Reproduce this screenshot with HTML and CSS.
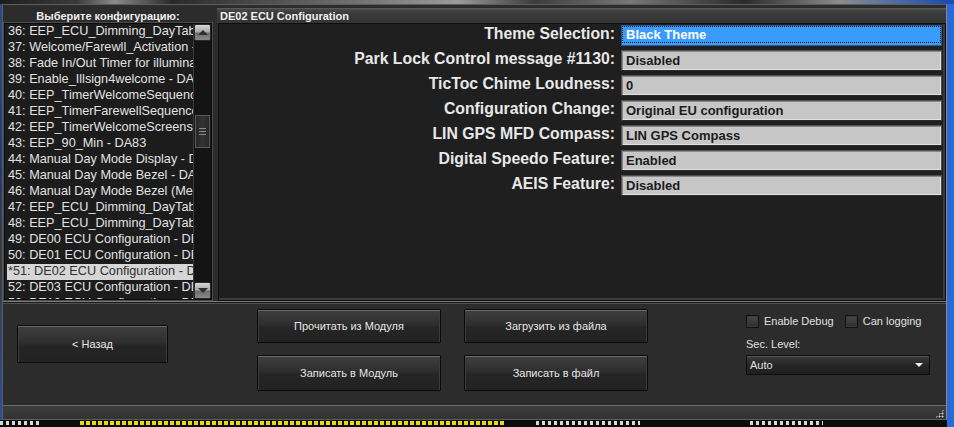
FILE: index.html
```html
<!DOCTYPE html>
<html lang="ru">
<head>
<meta charset="UTF-8">
<meta name="viewport" content="width=device-width, initial-scale=1.0">
<title>DE02 ECU Configuration</title>
<link rel="stylesheet" href="styles.css">
</head>
<body>
<div class="desk-top"></div>
<div class="desk">
  <div class="desk-left"></div>
  <div class="window">
    <div class="main">
      <div class="configs">
        <div class="caption center">Выберите конфигурацию:</div>
        <div class="listbox">
          <ul class="items">
            <li>36: EEP_ECU_Dimming_DayTable2 - DA80</li>
            <li>37: Welcome/Farewll_Activation - DA81</li>
            <li>38: Fade In/Out Timer for illumination - DA82</li>
            <li>39: Enable_Illsign4welcome - DA84</li>
            <li>40: EEP_TimerWelcomeSequence - DA85</li>
            <li>41: EEP_TimerFarewellSequence - DA86</li>
            <li>42: EEP_TimerWelcomeScreens - DA87</li>
            <li>43: EEP_90_Min - DA83</li>
            <li>44: Manual Day Mode Display - DA88</li>
            <li>45: Manual Day Mode Bezel - DA89</li>
            <li>46: Manual Day Mode Bezel (Menu) - DA8A</li>
            <li>47: EEP_ECU_Dimming_DayTable3 - DA8B</li>
            <li>48: EEP_ECU_Dimming_DayTable4 - DA8C</li>
            <li>49: DE00 ECU Configuration - DE00</li>
            <li>50: DE01 ECU Configuration - DE01</li>
            <li class="selected">*51: DE02 ECU Configuration - DE02</li>
            <li>52: DE03 ECU Configuration - DE03</li>
            <li>53: DE10 ECU Configuration - DE10</li>
          </ul>
          <div class="vscroll">
            <div class="sb-btn up"><span></span></div>
            <div class="sb-track"><div class="sb-thumb"></div></div>
            <div class="sb-btn down"><span></span></div>
          </div>
        </div>
      </div>
      <div class="editor">
        <div class="caption bar">DE02 ECU Configuration</div>
        <div class="editor-body">
          <div class="form">
            <div class="label">Theme Selection:</div>
            <div class="field focus"><span>Black Theme</span></div>
            <div class="label">Park Lock Control message #1130:</div>
            <div class="field"><span>Disabled</span></div>
            <div class="label">TicToc Chime Loudness:</div>
            <div class="field"><span>0</span></div>
            <div class="label">Configuration Change:</div>
            <div class="field"><span>Original EU configuration</span></div>
            <div class="label">LIN GPS MFD Compass:</div>
            <div class="field"><span>LIN GPS Compass</span></div>
            <div class="label">Digital Speedo Feature:</div>
            <div class="field"><span>Enabled</span></div>
            <div class="label">AEIS Feature:</div>
            <div class="field"><span>Disabled</span></div>
          </div>
        </div>
      </div>
    </div>

    <div class="actions">
      <button class="btn back">&lt; Назад</button>
      <div class="btn-grid">
        <button class="btn">Прочитать из Модуля</button>
        <button class="btn">Загрузить из файла</button>
        <button class="btn">Записать в Модуль</button>
        <button class="btn">Записать в файл</button>
      </div>
      <div class="options">
        <div class="checks">
          <label class="check"><span class="box"></span>Enable Debug</label>
          <label class="check"><span class="box"></span>Can logging</label>
        </div>
        <div class="opt-label">Sec. Level:</div>
        <div class="combo"><span>Auto</span><span class="arrow"></span></div>
      </div>
    </div>

    <div class="statusbar"><span class="grip"></span></div>
  </div>
</div>
<div class="desk-bottom"></div>
</body>
</html>
```

FILE: styles.css
```css
body {
  margin: 0;
  width: 954px;
  height: 427px;
  overflow: hidden;
  background: linear-gradient(90deg, #1a4fb8, #2a6ad8);
  font-family: "Liberation Sans", Arial, sans-serif;
  color: #e4e4e4;
}
.desk-top {
  height: 4px;
  background: linear-gradient(90deg, #1d1d1d 0, #3a3a3a 8%, #8a8a8a 12%, #2a2a2a 18%, #555 30%, #9a9a9a 48%, #3c3c3c 56%, #777 66%, #2a2a2a 78%, #8c8c8c 88%, #1e4fae 99%);
}
.desk {
  display: flex;
  height: 416px;
}
.desk-left {
  width: 2px;
  background: linear-gradient(#2a4d8a, #1a3a7a 40%, #3a3a3a 60%, #2850a0);
}
.window {
  width: 943px;
  border: 1px solid #5e5e5e;
  border-right-color: #8a8a8a;
  background: #2c2c2c;
  display: flex;
  flex-direction: column;
}
.desk-bottom {
  height: 7px;
  background:
    repeating-linear-gradient(90deg, #e4dc10 0 4px, transparent 4px 6px) 80px 1px / 425px 4px no-repeat,
    repeating-linear-gradient(90deg, #d8d8d8 0 3px, transparent 3px 6px) 0 1px / 40px 4px no-repeat,
    repeating-linear-gradient(90deg, #d8d8d8 0 3px, transparent 3px 6px) 536px 1px / 104px 4px no-repeat,
    repeating-linear-gradient(90deg, #d8d8d8 0 3px, transparent 3px 6px) 750px 1px / 73px 4px no-repeat,
    linear-gradient(90deg, #0c0c0c 947px, #2a6ad8 947px);
}

/* top part */
.main {
  height: 296px;
  display: flex;
  padding: 4px 0 0 1px;
  box-sizing: border-box;
}
.caption {
  height: 14px;
  font-size: 11px;
  font-weight: bold;
  color: #f0f0f0;
  line-height: 14px;
  white-space: nowrap;
}
.caption.center {
  text-align: center;
}
.caption.bar {
  padding-left: 3px;
  background: linear-gradient(#4a4a4a, #3a3a3a 30%, #343434);
  border-top: 1px solid #5a5a5a;
  margin-top: -1px;
}
.configs {
  width: 208px;
  display: flex;
  flex-direction: column;
}
.listbox {
  height: 275px;
  display: flex;
  background: #1c1c1c;
  border: 1px solid #0c0c0c;
  box-shadow: 0 0 0 1px #4a4a4a;
  overflow: hidden;
}
.items {
  flex: 1;
  margin: 0;
  padding: 0 0 0 2px;
  list-style: none;
  overflow: hidden;
  font-size: 12.7px;
}
.items li {
  height: 16px;
  line-height: 15px;
  white-space: nowrap;
  overflow: hidden;
  padding-left: 1px;
  color: #e2e2e2;
}
.items li.selected {
  background: #d6d6d6;
  color: #303030;
}
.vscroll {
  width: 17px;
  display: flex;
  flex-direction: column;
  background: #141414;
  border-left: 1px solid #3a3a3a;
}
.sb-btn {
  height: 17px;
  border-radius: 2px;
  background: linear-gradient(#d8d8d8, #a8a8a8 45%, #6e6e6e 55%, #8a8a8a);
  border: 1px solid #2a2a2a;
  box-sizing: border-box;
  display: flex;
  align-items: center;
  justify-content: center;
}
.sb-btn span {
  width: 0;
  height: 0;
  border-left: 5px solid transparent;
  border-right: 5px solid transparent;
}
.sb-btn.up span {
  border-bottom: 5px solid #2e2e2e;
}
.sb-btn.down span {
  border-top: 5px solid #2e2e2e;
}
.sb-track {
  flex: 1;
  padding-top: 74px;
}
.sb-thumb {
  height: 33px;
  margin: 0 1px;
  border: 1px solid #5a5a5a;
  box-sizing: border-box;
  background:
    repeating-linear-gradient(#8a8a8a 0 1px, transparent 1px 3px) center 12px / 7px 7px no-repeat,
    linear-gradient(90deg, #262626, #343434 50%, #262626);
}

.editor {
  flex: 1;
  margin-left: 5px;
  display: flex;
  flex-direction: column;
}
.editor-body {
  height: 278px;
  margin-left: 1px;
  background: #1f1f1f;
  border: 1px solid #0e0e0e;
  box-shadow: inset -2px -2px 0 #3a3a3a;
  box-sizing: border-box;
}
.form {
  display: grid;
  grid-template-columns: 1fr 321px;
  grid-auto-rows: 21px;
  column-gap: 6px;
  row-gap: 4px;
  padding: 1px 3px 0 0;
}
.label {
  text-align: right;
  font-size: 15.8px;
  font-weight: bold;
  color: #e8e8e8;
  line-height: 17px;
  white-space: nowrap;
}
.field {
  background: #c6c6c6;
  border: 1px solid #505050;
  border-bottom-color: #2a2a2a;
  box-shadow: inset 1px 1px 0 #8a8a8a, inset -1px -1px 0 #e0e0e0;
  font-size: 13px;
  font-weight: bold;
  color: #1c1c1c;
  line-height: 19px;
  padding-left: 2px;
  box-sizing: border-box;
}
.field span {
  display: inline-block;
  padding: 0 2px;
}
.field.focus {
  background: #3a9bfb;
  color: #fff;
  border-color: #2a5a90;
  box-shadow: none;
}
.field.focus span {
  display: block;
  margin: 1px 1px 0 -1px;
  line-height: 15px;
  height: 15px;
  outline: 1px dotted #1a1a1a;
  padding-left: 3px;
}

/* bottom part */
.actions {
  height: 104px;
  box-sizing: border-box;
  border-top: 1px solid #7a7a7a;
  box-shadow: inset 0 1px 0 #1a1a1a, inset 0 2px 0 #505050;
  display: flex;
  align-items: flex-start;
  padding-left: 14px;
}
.btn {
  font-family: "Liberation Sans", Arial, sans-serif;
  font-size: 11px;
  color: #e6e6e6;
  background: linear-gradient(#3f3f3f, #2e2e2e 45%, #252525 55%, #222);
  border: 1px solid #0b0b0b;
  box-shadow: inset 0 1px 0 #6a6a6a, inset 1px 0 0 #3c3c3c, inset -1px 0 0 #3c3c3c;
  padding: 0;
  border-radius: 1px;
}
.btn.back {
  width: 151px;
  height: 38px;
  margin-top: 23px;
}
.btn-grid {
  display: grid;
  grid-template-columns: 184px 184px;
  grid-template-rows: 34px 36px;
  column-gap: 23px;
  row-gap: 12px;
  margin: 7px 0 0 89px;
}
.options {
  width: 184px;
  margin: 12px 0 0 98px;
  font-size: 11px;
  color: #e0e0e0;
}
.checks {
  display: flex;
  gap: 11px;
  height: 14px;
  align-items: center;
}
.check {
  display: flex;
  align-items: center;
  gap: 5px;
}
.box {
  width: 11px;
  height: 11px;
  border: 1px solid #121212;
  background: linear-gradient(#4a4a4a, #2c2c2c);
  box-shadow: inset 0 0 0 1px #3a3a3a;
}
.opt-label {
  margin-top: 9px;
  height: 14px;
  line-height: 14px;
}
.combo {
  margin-top: 4px;
  height: 20px;
  box-sizing: border-box;
  border: 1px solid #0e0e0e;
  background: linear-gradient(#3a3a3a, #262626 50%, #1e1e1e);
  box-shadow: inset 0 1px 0 #555;
  display: flex;
  align-items: center;
  justify-content: space-between;
  padding: 0 6px 0 3px;
  font-size: 11px;
}
.arrow {
  width: 0;
  height: 0;
  border-left: 4px solid transparent;
  border-right: 4px solid transparent;
  border-top: 4px solid #f0f0f0;
}

.statusbar {
  height: 14px;
  box-sizing: border-box;
  border-top: 1px solid #6a6a6a;
  background: linear-gradient(#3c3c3c, #333);
  display: flex;
  justify-content: flex-end;
  align-items: flex-end;
}
.grip {
  width: 9px;
  height: 9px;
  margin: 0 2px 1px 0;
  background-image: radial-gradient(circle, #d0d0d0 0.8px, transparent 1.2px);
  background-size: 3px 3px;
  clip-path: polygon(100% 0, 100% 100%, 0 100%);
}
```
